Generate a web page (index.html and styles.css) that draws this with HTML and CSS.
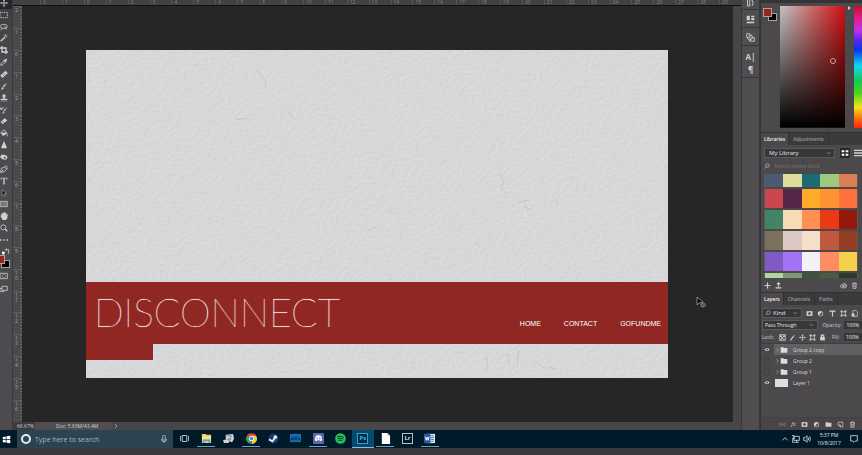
FILE: index.html
```html
<!DOCTYPE html>
<html lang="en">
<head>
<meta charset="utf-8">
<title>Disconnect</title>
<link rel="stylesheet" href="styles.css">
</head>
<body>
<svg class="sprite" aria-hidden="true">
  <symbol id="eye" viewBox="0 0 12 12"><path d="M1 6Q6 0 11 6Q6 12 1 6Z" fill="currentColor"/><circle cx="6" cy="6" r="2" fill="#4a484b"/></symbol>
  <symbol id="folder" viewBox="0 0 12 12"><path d="M1 2h4l1 1h5v7H1z" fill="currentColor"/></symbol>
  <symbol id="chev" viewBox="0 0 12 12"><path d="M4 2l4 4-4 4" class="line"/></symbol>
  <symbol id="trash" viewBox="0 0 12 12"><path d="M2 3h8M4.500 3V1.500h3V3M3 3l.5 8h5L9 3M5 5v4M7 5v4" class="line"/></symbol>
  <symbol id="brush" viewBox="0 0 12 12"><path d="M11 1L6 8 4 6z" fill="currentColor"/><path d="M4 7l2 2q-2 3-5 2 2-1 3-4z" fill="currentColor"/></symbol>
  <symbol id="move" viewBox="0 0 12 12"><path d="M6 1v10M1 6h10M4.500 2.500L6 1l1.500 1.500M4.500 9.500L6 11l1.500-1.500M2.500 4.500L1 6l1.500 1.500M9.500 4.500L11 6 9.500 7.500" class="line"/></symbol>
  <symbol id="search" viewBox="0 0 12 12"><circle cx="7" cy="5" r="3.500" class="line"/><path d="M4.500 7.500L1 11" class="line"/></symbol>
  <symbol id="half" viewBox="0 0 12 12"><circle cx="6" cy="6" r="4.500" fill="currentColor"/><path d="M3.500 8.500A3.500 3.500 0 0 0 8.500 3.500z" fill="#4a484b"/></symbol>
  <symbol id="frame" viewBox="0 0 12 12"><path d="M3 3h6v6H3z" class="line"/><path d="M1 1h3v3H1zM8 1h3v3H8zM1 8h3v3H1zM8 8h3v3H8z" fill="currentColor"/></symbol>
  <symbol id="page" viewBox="0 0 12 12"><path d="M2 2h8v8H6L2 7zM6 10V7H2" class="line"/></symbol>
  <symbol id="mask" viewBox="0 0 12 12"><path d="M1 2h10v8H1z" fill="currentColor"/><circle cx="6" cy="6" r="2.200" fill="#454346"/></symbol>
</svg>

<div class="app">
<main class="workspace">
  <aside class="toolbar" aria-label="Tools">
    <div class="tools">
      <button aria-label="Move"><svg><use href="#move"/></svg></button>
      <button aria-label="Marquee"><svg viewBox="0 0 12 12"><path d="M0 2h11v8H0z" class="line" stroke-dasharray="2 1"/></svg></button>
      <button aria-label="Lasso"><svg viewBox="0 0 12 12"><path d="M2 8Q-1 2 5 2t6 3-5 3-4 0q1 2-1 3M7 5l3 5" class="line"/></svg></button>
      <button aria-label="Magic wand"><svg viewBox="0 0 12 12"><path d="M1 11l7-7" class="line thick"/><path d="M8 0v3M11 4H9M6 2l1 1M11 1l-1 1" class="line"/></svg></button>
      <button aria-label="Crop"><svg viewBox="0 0 12 12"><path d="M3 0v9h9M0 3h9v9" class="line thick"/></svg></button>
      <button aria-label="Eyedropper"><svg viewBox="0 0 12 12"><path d="M1 11l1-3 4-4 2 2-4 4z" class="line"/><path d="M5 3l4 4 1-1-1-1 2-3-2-1-2 2-1-1z" fill="currentColor"/></svg></button>
      <button aria-label="Healing brush"><svg viewBox="0 0 12 12"><path d="M2 10l8-7" class="line band"/><path d="M4 7l2 2M6 5l2 2" stroke="#4a484b"/></svg></button>
      <button aria-label="Brush"><svg><use href="#brush"/></svg></button>
      <button aria-label="Clone stamp"><svg viewBox="0 0 12 12"><circle cx="6" cy="3" r="2.500" fill="currentColor"/><path d="M5 4h2v3h4v2H1V7h4zM1 10h10v1H1z" fill="currentColor"/></svg></button>
      <button aria-label="History brush"><svg viewBox="0 0 12 12"><path d="M11 1L7 8 5 7zM5 8l2 1q-2 3-4 2 2-1 2-3z" fill="currentColor"/><path d="M1 5q1-3 5-2M1 2v3h3" class="line"/></svg></button>
      <button aria-label="Eraser"><svg viewBox="0 0 12 12"><path d="M1 7l6-5 4 3-6 5H3z" fill="currentColor"/><path d="M3 6l4 3M4 11h7" stroke="#4a484b"/></svg></button>
      <button aria-label="Paint bucket"><svg viewBox="0 0 12 12"><path d="M1 6l5-5 4 5-5 4zM2 6h8q1 2 1 5" class="line"/><path d="M2 6h8l-5 4z" fill="currentColor"/></svg></button>
      <button aria-label="Sharpen"><svg viewBox="0 0 12 12"><path d="M6 0l4 9v2H2V9z" fill="currentColor"/></svg></button>
      <button aria-label="Dodge"><svg viewBox="0 0 12 12"><path d="M0 6q2-5 7-3 4 0 4 4 0 3-4 3-5 0-7-4z" fill="currentColor"/><circle cx="7" cy="7" r="1.500" fill="#4a484b"/></svg></button>
      <button aria-label="Pen"><svg viewBox="0 0 12 12"><path d="M1 11l1-6 5-2 3 3-3 4zM1 11l4-4M7 3l2-2 3 3-2 2" class="line"/></svg></button>
      <button aria-label="Type"><svg viewBox="0 0 12 12"><path d="M1 1h10v3h-1L9.500 2H7v8h1v1H4v-1h1V2H2.500L2 4H1z" fill="currentColor"/></svg></button>
      <button aria-label="Path selection"><svg viewBox="0 0 12 12"><path d="M3 1v9l2-2 2 3 1-1-1-3h3z" fill="#151516" stroke="#cfcfcf" stroke-width=".7"/></svg></button>
      <button aria-label="Rectangle"><svg viewBox="0 0 12 12"><path d="M0 2h11v8H0z" fill="#777578" stroke="#d5d5d5"/></svg></button>
      <button aria-label="Hand"><svg viewBox="0 0 12 12"><path d="M0 5l2 1V2h1.500v2L4 1h1.500v3L6 0h1.500v4L8 1h1.500v4L10 3h1.500q0 8-3 9H4z" fill="currentColor"/></svg></button>
      <button aria-label="Zoom"><svg viewBox="0 0 12 12"><circle cx="5" cy="5" r="3.800" class="line"/><path d="M8 8l3 3" class="line thick"/></svg></button>
      <button aria-label="More tools"><svg viewBox="0 0 12 12"><path d="M0 5h2v2H0zM5 5h2v2H5zM10 5h2v2h-2z" fill="currentColor"/></svg></button>
    </div>
    <button class="swap" aria-label="Swap colours"><svg viewBox="0 0 12 12"><path d="M0 7h4v4H0z" fill="#fff"/><path d="M6 4h4v6M7 2L5 4l2 2" class="line"/></svg></button>
    <div class="fgbg"><i class="bg"></i><i class="fg"></i></div>
    <button class="mode" aria-label="Quick mask"><svg viewBox="0 0 12 12"><path d="M0 2h11v8H0z" class="line"/><circle cx="5.500" cy="6" r="2.500" class="line" stroke-dasharray="1 1"/></svg></button>
    <button class="mode" aria-label="Screen mode"><svg viewBox="0 0 12 12"><path d="M3 2h8v6H3zM3 5H0v5h6V8" class="line"/></svg></button>
  </aside>

  <section class="document">
    <div class="ruler-h"><span>2</span><span>1</span><span>0</span><span>1</span><span>2</span><span>3</span><span>4</span><span>5</span><span>6</span><span>7</span><span>8</span><span>9</span><span>10</span><span>11</span><span>12</span><span>13</span><span>14</span><span>15</span><span>16</span><span>17</span><span>18</span><span>19</span><span>20</span><span>21</span><span>22</span><span>23</span><span>24</span><span>25</span><span>26</span><span>27</span><span>28</span><span>29</span></div>
    <div class="stage">
      <div class="ruler-v"><span>2</span><span>1</span><span>0</span><span>1</span><span>2</span><span>3</span><span>4</span><span>5</span><span>6</span><span>7</span><span>8</span><span>9</span><span>1<br>0</span><span>1<br>1</span><span>1<br>2</span><span>1<br>3</span><span>1<br>4</span><span>1<br>5</span><span>1<br>6</span></div>
      <div class="canvas">
        <div class="artboard">
          <svg class="plaster" preserveAspectRatio="none" aria-hidden="true">
            <filter id="wall" x="0" y="0" width="100%" height="100%" color-interpolation-filters="sRGB">
              <feTurbulence type="fractalNoise" baseFrequency=".25 .32" numOctaves="3" seed="8" result="n"/>
              <feDiffuseLighting in="n" surfaceScale=".5" diffuseConstant="1.080" lighting-color="#d8d8da"><feDistantLight azimuth="225" elevation="68"/></feDiffuseLighting>
            </filter>
            <rect width="100%" height="100%" fill="#d8d8da"/>
            <rect width="100%" height="100%" filter="url(#wall)" opacity=".3"/>
            <g fill="none" stroke="#b4b4b6" stroke-width=".8" opacity=".6">
              <path d="M171 20l8 10 1 8M150 70l12-2M201 60l8 10M414 124l4 8-3 5 5 6M433 152l10-2M438 157l8 3M470 148l2 8M388 192l7 6M302 160l7 5M282 180l9-3M421 303l3 12M433 300l-2 18M448 310l10 8M462 316l9 4M402 306l-2 14"/>
            </g>
          </svg>
          <header class="banner">
            <h1>DISCONNECT</h1>
            <nav><a href="#home">HOME</a><a href="#contact">CONTACT</a><a href="#gofundme">GOFUNDME</a></nav>
          </header>
          <div class="banner-tab"></div>
        </div>
        <svg class="cursor" viewBox="0 0 11 13" aria-hidden="true"><path d="M1 1v8l2-2 4-1z" fill="#050505" stroke="#b5b5b5" stroke-width=".7"/><path d="M7 6v6M4 9h6M5 7.500h4v3H5z" stroke="#858585" stroke-width=".7" fill="none"/></svg>
      </div>
    </div>
    <footer class="status"><span class="zoom">66.67%</span><span class="size">Doc: 5.93M/43.4M</span><svg><use href="#chev"/></svg></footer>
  </section>

  <aside class="dock" aria-label="Collapsed panels">
    <div class="cell first"><button aria-label="History"><svg viewBox="0 0 12 12"><path d="M2 0v8h3V0M8 8q3-3 0-8" class="line"/></svg></button></div>
    <div class="cell"><button aria-label="Properties"><svg viewBox="0 0 12 12"><path d="M1 1h4v6H1zM7 1h4v2H7zM7 4h4v3H7zM1 9h10v2H1z" fill="currentColor"/></svg></button></div>
    <div class="cell"><button aria-label="Clone source"><svg viewBox="0 0 12 12"><path d="M1 1h4v5H1zM5 3h3v5H4M8 6h3v5H6V8M2 7l3 4" class="line"/></svg></button></div>
    <div class="cell pair"><button aria-label="Character">A|</button><button aria-label="Paragraph">¶</button></div>
  </aside>

  <aside class="panels">
    <section class="color" aria-label="Color">
      <div class="fgbg"><i class="bg"></i><i class="fg"></i></div>
      <div class="field"><i class="picker"></i></div>
      <div class="arrow"></div>
      <div class="hue"></div>
    </section>

    <section class="libraries">
      <div class="tabs"><button class="active">Libraries</button><button>Adjustments</button></div>
      <div class="row lib">
        <select aria-label="Library"><option>My Library</option></select>
        <button class="grid-view" aria-label="Grid view"><svg viewBox="0 0 12 12"><path d="M1 2h4v3H1zM7 2h4v3H7zM1 7h4v3H1zM7 7h4v3H7z" fill="currentColor"/></svg></button>
        <button aria-label="List view"><svg viewBox="0 0 12 12"><path d="M0 1h12v2H0zM0 5h12v2H0zM0 9h12v2H0z" fill="currentColor"/></svg></button>
      </div>
      <label class="row find"><svg><use href="#search"/></svg><input aria-label="Search Adobe Stock" placeholder="Search Adobe Stock"></label>
      <div class="swatches">
        <div class="c-short"><i class="slate"></i><i class="cream"></i><i class="teal"></i><i class="sage"></i><i class="clay"></i></div>
        <div><i class="rose"></i><i class="plum"></i><i class="amber"></i><i class="orange"></i><i class="coral"></i></div>
        <div><i class="jade"></i><i class="sand"></i><i class="peach"></i><i class="flame"></i><i class="brick"></i></div>
        <div><i class="moss"></i><i class="blush"></i><i class="linen"></i><i class="terra"></i><i class="rust"></i></div>
        <div><i class="violet"></i><i class="lilac"></i><i class="snow"></i><i class="salmon"></i><i class="gold"></i></div>
        <div class="c-sliver"><i class="mint"></i><i class="fern"></i><i class="pine"></i><i class="olive"></i><i class="forest"></i></div>
      </div>
      <div class="row lib-foot">
        <button aria-label="Add"><svg viewBox="0 0 12 12"><path d="M6 1v10M1 6h10" class="line thick"/></svg></button>
        <button aria-label="Upload"><svg viewBox="0 0 12 12"><path d="M6 0l4 4H7v4H5V4H2zM1 9h10v2H1z" fill="currentColor"/></svg></button>
        <span class="push"></span>
        <button aria-label="Creative Cloud"><svg viewBox="0 0 12 12"><path d="M3 10Q0 9 1 6q1-2 3-2 2-3 5-1 3 1 2 5 0 2-3 2z" class="line"/><circle cx="5" cy="7" r="1.500" class="line"/><circle cx="8" cy="6" r="1.500" class="line"/></svg></button>
        <button aria-label="Delete"><svg><use href="#trash"/></svg></button>
      </div>
    </section>

    <section class="layers">
      <div class="tabs"><button class="active">Layers</button><button>Channels</button><button>Paths</button></div>
      <div class="row filter">
        <span class="kind"><svg><use href="#search"/></svg><select aria-label="Filter kind"><option>Kind</option></select></span>
        <button aria-label="Pixel layers"><svg><use href="#mask"/></svg></button>
        <button aria-label="Adjustment layers"><svg><use href="#half"/></svg></button>
        <button aria-label="Type layers"><svg viewBox="0 0 12 12"><path d="M1 1h10v3h-1L9 3H7v8H5V3H3L2 4H1z" fill="currentColor"/></svg></button>
        <button aria-label="Shape layers"><svg><use href="#frame"/></svg></button>
        <button aria-label="Smart objects"><svg viewBox="0 0 12 12"><path d="M3 1h6l2 2v8H3z" class="line"/><path d="M1 6h5v5H1z" fill="currentColor"/></svg></button>
      </div>
      <div class="row blend"><select aria-label="Blend mode"><option>Pass Through</option></select><label for="opacity">Opacity:</label><input id="opacity" value="100%"></div>
      <div class="row lock">
        <span>Lock:</span>
        <button aria-label="Lock transparency"><svg viewBox="0 0 12 12"><path d="M1 1h10v10H1z" class="line"/><path d="M2 2h3v3H2zM7 2h3v3H7zM4 5h3v3H4zM2 8h3v2H2zM7 8h3v2H7z" fill="currentColor"/></svg></button>
        <button aria-label="Lock pixels"><svg><use href="#brush"/></svg></button>
        <button aria-label="Lock position"><svg><use href="#move"/></svg></button>
        <button aria-label="Lock artboard"><svg><use href="#frame"/></svg></button>
        <button aria-label="Lock all"><svg viewBox="0 0 12 12"><path d="M2 5h8v6H2z" fill="currentColor"/><path d="M4 5V2h4v3" class="line thick"/></svg></button>
        <label for="fill">Fill:</label><input id="fill" value="100%">
      </div>
      <ul>
        <li class="selected"><svg class="eye"><use href="#eye"/></svg><svg class="twist"><use href="#chev"/></svg><svg class="thumb"><use href="#folder"/></svg><span>Group 2 copy</span></li>
        <li><i class="eye"></i><svg class="twist"><use href="#chev"/></svg><svg class="thumb"><use href="#folder"/></svg><span>Group 2</span></li>
        <li><i class="eye"></i><svg class="twist"><use href="#chev"/></svg><svg class="thumb"><use href="#folder"/></svg><span>Group 1</span></li>
        <li><svg class="eye"><use href="#eye"/></svg><i class="preview"></i><span>Layer 1</span></li>
      </ul>
      <div class="row layer-foot">
        <button class="dim" aria-label="Link layers"><svg viewBox="0 0 12 12"><path d="M5 4H1v4h4M7 4h4v4H7M3 6h6" class="line"/></svg></button>
        <button aria-label="Layer style"><em>fx</em></button>
        <button aria-label="Add mask"><svg><use href="#mask"/></svg></button>
        <button aria-label="Adjustment layer"><svg><use href="#half"/></svg></button>
        <button aria-label="New group"><svg><use href="#folder"/></svg></button>
        <button aria-label="New layer"><svg><use href="#page"/></svg></button>
        <button aria-label="Delete layer"><svg><use href="#trash"/></svg></button>
      </div>
    </section>
  </aside>
</main>

<footer class="taskbar">
  <button class="start" aria-label="Start"><svg viewBox="0 0 12 12"><path d="M1 2.500l4-.6v3.600H1zM6 1.700l5-.7v4.500H6zM1 6.500h4v3.600l-4-.6zM6 6.500h5V11l-5-.7z" fill="#fff"/></svg></button>
  <label class="cortana"><i class="ring"></i><input aria-label="Search" placeholder="Type here to search"><svg viewBox="0 0 12 12"><rect x="4" y="0" width="4" height="8" rx="2" class="line"/><path d="M2 6q0 4 4 4t4-4M6 10v2" class="line"/></svg></label>
  <div class="apps">
    <button aria-label="Task view"><svg viewBox="0 0 12 12"><path d="M3 2h6v8H3zM1.500 3H.5v6h1M10.500 3h1v6h-1" class="line"/></svg></button>
    <button class="open" aria-label="File Explorer"><svg viewBox="0 0 12 12"><path d="M1 1h4l1 1h5v9H1z" fill="#f6cf62"/><path d="M1 4h10v2H1z" fill="#ffe79b"/><path d="M2 7h8v4H8V9H4v2H2z" fill="#4aa9dc"/></svg></button>
    <button aria-label="Paint"><svg viewBox="0 0 12 12"><path d="M3 2l8-1 1 5-2 4-3-1-1 2H1l-1-3 3-1z" fill="#cfd5d9"/><path d="M4 3l5 0-1 3-4 1M6 8l3-1" stroke="#76828a" fill="none"/></svg></button>
    <button class="open" aria-label="Chrome"><svg viewBox="0 0 12 12"><path d="M6 6L1 3a5.800 5.800 0 0 1 10 0z" fill="#e4483a"/><path d="M6 6V3h5a5.800 5.800 0 0 1-5 9z" fill="#f8cb3c"/><path d="M6 6v6A5.800 5.800 0 0 1 1 3z" fill="#37a455"/><circle cx="6" cy="6" r="2.800" fill="#fff"/><circle cx="6" cy="6" r="2" fill="#4387ec"/></svg></button>
    <button aria-label="Steam"><svg viewBox="0 0 12 12"><circle cx="6" cy="6" r="5.500" fill="#17396a"/><circle cx="8" cy="4.500" r="2" fill="#e8eef4"/><path d="M1 7l4 2 2-3" stroke="#e8eef4" stroke-width="2" fill="none"/></svg></button>
    <button aria-label="Media"><svg viewBox="0 0 12 12"><path d="M0 1h12v9H0z" fill="#126cb0"/><path d="M1 5h3v3H1zM5 4h3v4H5zM9 5h2v3H9z" fill="#093d6b"/></svg></button>
    <button class="open" aria-label="Discord"><svg viewBox="0 0 12 12"><rect width="12" height="12" rx="1" fill="#5968ad"/><path d="M3 3q3-1 6 0l1 5-2 1-1-1H5L4 9 2 8z" fill="#fff"/><path d="M4 5h1v2H4zM7 5h1v2H7z" fill="#5968ad"/></svg></button>
    <button aria-label="Spotify"><svg viewBox="0 0 12 12"><circle cx="6" cy="6" r="5.800" fill="#20c45a"/><path d="M2.500 4q4-1 7 .7M3 6q3-1 6 .7M3.500 8q2-.7 4.500.7" stroke="#082e1c" fill="none"/></svg></button>
    <button class="open current" aria-label="Photoshop"><span class="badge ps">Ps</span></button>
    <button class="open" aria-label="Notepad"><svg viewBox="0 0 12 12"><path d="M2 0h6l3 3v9H2z" fill="#fff"/><path d="M8 0v3h3" fill="#b9c4c9"/></svg></button>
    <button aria-label="Lightroom"><span class="badge lr">Lr</span></button>
    <button class="open" aria-label="Word"><svg viewBox="0 0 12 12"><path d="M5 1h7v10H5z" fill="#f0f4fb"/><path d="M7 3h4M7 5h4M7 7h4M7 9h4" stroke="#3c66ad"/><path d="M0 1l7-1v12l-7-1z" fill="#2b569d"/><path d="M1.500 4l1 4 1-3.500 1 3.500 1-4" stroke="#fff" fill="none"/></svg></button>
  </div>
  <div class="tray">
    <svg viewBox="0 0 12 12"><path d="M2 8l4-4 4 4" class="line"/></svg>
    <svg viewBox="0 0 12 12"><path d="M3 2h8v6H3zM5 11h5M7 8v3M0 1h3v4H1v6h3" class="line"/></svg>
    <svg viewBox="0 0 12 12"><path d="M1 4h2l3-3v10L3 8H1zM8 4q1 2 0 4M10 2q2 4 0 8" class="line"/></svg>
    <div class="clock"><time>5:37 PM</time><time>10/8/2017</time></div>
    <svg class="note" viewBox="0 0 12 12"><path d="M1 1h10v8H8l-2 2-2-2H1z" class="line"/></svg>
  </div>
</footer>
</div>
</body>
</html>
```

FILE: styles.css
```css
* { box-sizing: border-box; }
html, body { height: 100%; }
body {
  margin: 0;
  overflow: hidden;
  background: #3a3b3f;
  color: #d2d0d2;
  font: 6px/8px "Open Sans", "Liberation Sans", sans-serif;
}
button, input, select {
  margin: 0;
  padding: 0;
  border: 0;
  border-radius: 0;
  background: none;
  color: inherit;
  font: inherit;
  appearance: none;
  min-width: 0;
}
button { display: flex; align-items: center; justify-content: center; }
svg { display: block; width: 8px; height: 8px; flex: none; }
ul { margin: 0; padding: 0; list-style: none; }
i { display: block; }
.sprite { position: absolute; width: 0; height: 0; }
.line { fill: none; stroke: currentColor; stroke-width: 1.2; }
.thick { stroke-width: 2; }
.band { stroke-width: 5; }

.app { display: flex; flex-direction: column; height: 100%; padding-bottom: 7px; }
.workspace { display: flex; flex: 1; min-height: 0; background: #4d4b4e; }

/* Tool column */
.toolbar {
  width: 13px;
  flex: none;
  overflow: hidden;
  background: linear-gradient(#3d3c3e, #4d4b4e 70px);
  border-right: 1px solid #39383a;
}
.tools { display: grid; grid-template-rows: repeat(21, 1fr); height: 249px; margin-top: -3px; }
.tools button, .mode { width: 8px; }
.tools button { border-radius: 1px; }
.tools button:first-child { width: 12px; padding-right: 4px; background: #272628; }
.swap { width: 11px; height: 9px; }
.mode { height: 12px; margin-top: 1px; }
.fgbg { display: grid; grid-template-columns: 5px 4px 5px; grid-template-rows: 5px 4px 4px; width: 14px; }
.fgbg .fg { grid-area: 1 / 1 / 3 / 3; background: #982620; border: 1px solid #b0a0a0; }
.fgbg .bg { grid-area: 2 / 2 / 4 / 4; background: #000; border: 1px solid #a3a3a3; }
.toolbar .fgbg { margin: 0 0 2px -4px; }

/* Document window */
.document { display: flex; flex: 1; flex-direction: column; min-width: 0; background: #484649; }
.ruler-h {
  display: flex;
  height: 6px;
  padding-left: 27px;
  overflow: hidden;
  background: #414042;
  border-bottom: 1px solid #121112;
  color: #858285;
  font-size: 5px;
  line-height: 5px;
}
.ruler-h span { flex: 1; min-width: 0; padding-left: 2px; border-left: 1px solid #555356; }
.stage { display: flex; flex: 1; min-height: 0; padding-right: 8px; }
.ruler-v {
  display: flex;
  flex-direction: column;
  width: 9px;
  background: #4b494c;
  color: #a3a0a3;
  font-size: 5px;
  line-height: 5px;
}
.ruler-v span {
  flex: 1;
  min-height: 0;
  padding: 1px 0 0 2px;
  border-top: 1px solid #625f62;
  background: repeating-linear-gradient(#6b686b 0 1px, transparent 1px 3px) right / 2px 100% no-repeat;
}
.canvas { position: relative; display: flex; flex: 1; padding: 44px 65px 44px 64px; background: #262626; }
.artboard { position: relative; display: flex; flex: 1; flex-direction: column; justify-content: flex-end; padding-bottom: 18px; background: #d9d9db; }
.plaster { position: absolute; inset: 0; width: 100%; height: 100%; }
.banner, .banner-tab { position: relative; background: #902722; }
.banner { display: flex; justify-content: space-between; align-items: center; height: 62px; padding: 0 7px 0 8px; }
.banner-tab { width: 67px; height: 16px; }
.banner h1 { margin: 0; padding-bottom: 2px; color: #fff; font: 200 39px/40px Lato, sans-serif; text-shadow: 0 0 1px #fff; }
.banner nav { display: flex; gap: 23px; padding-top: 22px; }
.banner a { color: #fff; font: 7px/8px "Liberation Sans", Arial, sans-serif; text-decoration: none; }
.cursor { position: absolute; left: 674px; top: 290px; width: 11px; height: 13px; }
.status { display: flex; align-items: center; height: 8px; background: #484649; }
.status span { font-size: 5px; }
.status .zoom { width: 22px; padding-left: 4px; background: #3c3b3d; }
.status .size { width: 78px; padding-left: 21px; background: #504e51; }
.status svg { width: 6px; height: 6px; }

/* Collapsed panel icons */
.dock { width: 19px; flex: none; background: #4f4d50; border: solid #393839; border-width: 0 1px; }
.dock svg { width: 9px; height: 9px; }
.cell { display: flex; flex-direction: column; align-items: center; height: 18px; padding-top: 5px; border-bottom: 1px solid #373637; }
.cell.first { height: 10px; padding: 0; }
.cell.pair { height: 32px; gap: 4px; padding-top: 6px; }
.cell.pair button { height: 9px; font: 700 8px/9px "Open Sans", sans-serif; }

/* Panels */
.panels { display: flex; flex-direction: column; width: 102px; flex: none; overflow: hidden; background: #4b494c; border-left: 1px solid #353435; }
.row { display: flex; align-items: center; }
.tabs { display: flex; height: 13px; background: #3b3a3c; border-top: 1px solid #323132; color: #9c999c; }
.tabs button { padding: 0 4px; border-right: 1px solid #313031; font-size: 5px; font-weight: 600; }
.tabs button:first-child { padding: 0 3px; }
.tabs .active { background: #4b494c; color: #eee; }

.color { display: grid; grid-template-columns: 14px 65px 1fr 9px; column-gap: 3px; height: 132px; padding: 3px 0 4px 2px; border-top: 3px solid #343335; }
.color .fgbg { margin-top: 2px; }
.color .field { position: relative; background: linear-gradient(transparent, #000), linear-gradient(90deg, #c5c3c4, #d20f10); border-bottom: 1px solid #111; }
.picker { position: absolute; left: 50px; top: 52px; width: 6px; height: 6px; border: 1px solid #d49c9c; border-radius: 50%; }
.arrow { width: 3px; height: 4px; background: #ccc; clip-path: polygon(0 0, 100% 50%, 0 100%); justify-self: end; }
.hue { background: linear-gradient(#c31224, #e21b8e 10%, #c72ee8 20%, #4b27f2 29%, #0834f0 36%, #12d9ef 49%, #14c95b 61%, #46d51c 71%, #f4e31d 83%, #ff7b10 91%, #ff2410); }

.lib { height: 16px; gap: 5px; padding-left: 3px; }
.lib select { width: 76px; }
select {
  height: 10px;
  padding: 0 4px;
  border: 1px solid #5b595c;
  color: #e6e4e6;
}
.lib select, .blend select, .kind {
  background: #373638 url("data:image/svg+xml,%3Csvg xmlns='http://www.w3.org/2000/svg' viewBox='0 0 6 4'%3E%3Cpath d='M1 1l2 2 2-2' fill='none' stroke='%23aaa' stroke-width='.8'/%3E%3C/svg%3E") right 3px center / 5px 4px no-repeat;
}
.grid-view { height: 10px; width: 11px; background: #29282a; color: #fff; }
.find { height: 9px; gap: 4px; padding-left: 3px; }
.find svg { width: 6px; height: 6px; }
.find input { width: 70px; height: 8px; font-size: 5px; }
.find input::placeholder { color: #777477; opacity: 1; }
.swatches { display: flex; flex-direction: column; gap: 2px; margin-top: 4px; padding: 0 4px 0 3px; }
.swatches div { display: grid; grid-template-columns: repeat(5, 1fr); height: 19px; border: 1px solid #5b595b; border-width: 0 1px; }
.swatches .c-short { height: 13px; }
.swatches .c-sliver { height: 5px; }
.slate { background: #4c5b74; } .cream { background: #e0dc9c; } .teal { background: #1c6a74; } .sage { background: #9cc880; } .clay { background: #dc7e56; }
.rose { background: #cc464e; } .plum { background: #582648; } .amber { background: #ffab27; } .orange { background: #ff9332; } .coral { background: #ff703e; }
.jade { background: #428466; } .sand { background: #f5dcb3; } .peach { background: #ff8f52; } .flame { background: #e83a17; } .brick { background: #94190d; }
.moss { background: #7c715d; } .blush { background: #dcc9c1; } .linen { background: #f5dfca; } .terra { background: #bf5940; } .rust { background: #943f22; }
.violet { background: #805bc3; } .lilac { background: #a273f5; } .snow { background: #f4f1f6; } .salmon { background: #ff8b60; } .gold { background: #f6cf4d; }
.mint { background: #afd5a0; } .fern { background: #7d9973; } .pine { background: #3d5440; } .olive { background: #485d3d; } .forest { background: #2b382a; }
.lib-foot { height: 14px; gap: 4px; padding: 0 4px 0 3px; }
.lib-foot svg { width: 7px; height: 7px; }
.push { flex: 1; }

.layers { display: flex; flex: 1; flex-direction: column; min-height: 0; }
.filter { height: 14px; padding: 2px 4px 0 1px; justify-content: space-between; }
.filter > button svg, .lock svg { width: 7px; height: 7px; }
.kind { display: flex; align-items: center; width: 40px; height: 10px; padding-left: 2px; border: 1px solid #5b595c; }
.kind svg { width: 6px; height: 6px; }
.kind select { height: 8px; padding: 0 2px; border: 0; background: none; }
.blend { height: 12px; gap: 4px; padding-left: 1px; }
.blend select { width: 58px; padding: 0 2px; font-size: 5px; }
.blend label { width: 18px; font-size: 5px; white-space: nowrap; }
.blend input, .lock input { width: 18px; height: 8px; padding-left: 2px; background: #373638; color: #eee; font-size: 5px; }
.lock { height: 12px; gap: 3px; padding-left: 1px; font-size: 5px; }
.lock > span { width: 12px; margin-right: 2px; }
.lock label { width: 9px; margin-left: auto; }
.layers ul { flex: 1; background: #4b494c; border-top: 1px solid #3e3d3f; }
.layers li { display: flex; align-items: center; height: 11px; padding-left: 3px; font-size: 5px; color: #dddbdd; }
.layers li.selected { background: linear-gradient(90deg, #4b494c 13px, #626063 13px); }
.eye { width: 6px; height: 7px; margin-right: 5px; }
i.eye { border: 1px solid #403f41; }
.twist { width: 5px; height: 6px; }
.thumb { width: 8px; height: 8px; margin-right: 5px; }
.preview { width: 13px; height: 8px; margin-right: 5px; background: #dedee0; }
.layer-foot { height: 13px; justify-content: flex-end; gap: 5px; padding: 0 6px 0 0; border-top: 1px solid #403f41; background: #474548; }
.layer-foot svg { width: 7px; height: 7px; }
.layer-foot .dim { color: #7b787b; }

/* Taskbar */
.taskbar { display: flex; height: 18px; flex: none; background: #001a29; }
.start { width: 17px; padding-right: 4px; }
.start svg { width: 9px; height: 9px; }
.cortana { display: flex; align-items: center; width: 156px; padding: 0 5px 0 4px; background: #2c4352; color: #b9c4ca; }
.ring { width: 10px; height: 10px; border: 2px solid #e6edf0; border-radius: 50%; }
.cortana input { flex: 1; height: 14px; padding-left: 4px; font-size: 7px; }
.cortana input::placeholder { color: #a9b6bd; opacity: 1; }
.apps { display: grid; grid-template-columns: repeat(12, 1fr); width: 268px; }
.apps button { padding: 0 5px; border-bottom: 1px solid transparent; }
.apps svg { width: 11px; height: 11px; }
.apps button:first-child svg { width: 9px; height: 9px; }
.apps .open { background: linear-gradient(#6f9fbd, #6f9fbd) center bottom / 18px 1px no-repeat; }
.apps .current { background: #064a70; border-bottom-color: #86bbdc; }
.badge { width: 11px; height: 11px; border: 1px solid #b0c2cc; color: #cbd9e0; font: 700 6px/9px "Open Sans", sans-serif; flex: none; }
.badge.ps { border-color: #2aa5d8; background: #05263c; color: #35bdf4; }
.tray { display: flex; align-items: center; gap: 3px; margin-left: auto; padding-right: 4px; color: #e1e8ec; }
.clock { display: flex; flex-direction: column; align-items: center; width: 26px; margin: 0 5px 0 2px; font-size: 5px; line-height: 8px; white-space: nowrap; }
```
